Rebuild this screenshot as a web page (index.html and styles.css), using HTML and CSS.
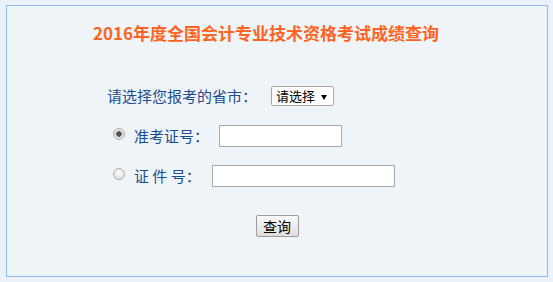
FILE: index.html
```html
<!DOCTYPE html>
<html lang="zh-CN">
<head>
<meta charset="utf-8">
<title>2016年度全国会计专业技术资格考试成绩查询</title>
<link rel="stylesheet" href="styles.css">
</head>
<body>
<div class="panel">
  <h1 class="title">2016年度全国会计专业技术资格考试成绩查询</h1>
  <form class="form">
    <div class="row row-province">
      <span class="label">请选择您报考的省市：</span>
      <span class="select-wrap">
        <select class="select">
          <option>请选择</option>
        </select>
      </span>
    </div>
    <div class="row row-radio">
      <input type="radio" name="t" class="radio" checked>
      <span class="label">准考证号：</span>
      <input type="text" class="text text-short">
    </div>
    <div class="row row-radio">
      <input type="radio" name="t" class="radio">
      <span class="label">证 件 号：</span>
      <input type="text" class="text text-long">
    </div>
    <div class="row row-button">
      <button type="button" class="btn">查询</button>
    </div>
  </form>
</div>
</body>
</html>
```
FILE: styles.css
```css
html, body {
  margin: 0;
  padding: 0;
}
body {
  background: #ebf2f9;
  font-family: "Noto Sans CJK SC", "Microsoft YaHei", sans-serif;
  width: 553px;
  height: 282px;
  overflow: hidden;
}
.panel {
  margin: 5px 0 0 6px;
  width: 540px;
  height: 270px;
  border: 1px solid #8bbbe9;
  background: #eff4f8;
  box-sizing: content-box;
}
.title {
  margin: 0;
  padding: 15px 22px 0 0;
  height: 24px;
  line-height: 24px;
  text-align: center;
  font-size: 17px;
  font-weight: bold;
  color: #ff6321;
}
.form {
  margin: 0;
  padding: 40px 0 0 0;
}
.row {
  display: flex;
  align-items: center;
  height: 22px;
}
.row-province {
  padding-left: 100px;
}
.row-radio {
  margin-top: 18px;
  padding-left: 106px;
}
.row-button {
  margin-top: 28px;
  justify-content: center;
}
.label {
  font-size: 15px;
  color: #1d4b8f;
  line-height: 22px;
  white-space: pre;
}
.row-province .label {
  margin-right: 14px;
}
.select-wrap {
  position: relative;
  display: inline-block;
  height: 20px;
}
.select-wrap::after {
  content: "";
  position: absolute;
  right: 7px;
  top: 9px;
  width: 0;
  height: 0;
  border-left: 3px solid transparent;
  border-right: 3px solid transparent;
  border-top: 5px solid #000;
  pointer-events: none;
}
.select {
  appearance: none;
  -webkit-appearance: none;
  display: block;
  width: 63px;
  height: 20px;
  margin: 0;
  padding: 0 0 0 4px;
  border: 1px solid #a6a6a6;
  border-radius: 2px;
  background: #fff;
  font-family: "Noto Sans CJK SC", sans-serif;
  font-size: 13px;
  line-height: 18px;
  color: #000;
}
.radio {
  appearance: none;
  -webkit-appearance: none;
  width: 12px;
  height: 12px;
  margin: -4px 9px 0 0;
  border: 1px solid #b0b0b0;
  border-radius: 50%;
  background: radial-gradient(circle at 50% 40%, #fdfdfd, #d6d6d6);
  box-sizing: border-box;
}
.radio:checked {
  background: radial-gradient(circle, #555 0 2.5px, #dcdcdc 3px, #f0f0f0 100%);
}
.text {
  height: 22px;
  margin: 0;
  padding: 0 3px;
  border: 1px solid #a9a9a9;
  background: #fff;
  box-sizing: border-box;
  font-size: 14px;
}
.text-short {
  width: 123px;
  margin-left: 10px;
}
.text-long {
  width: 183px;
  margin-left: 11px;
}
.btn {
  width: 43px;
  height: 22px;
  margin: 0;
  padding: 0;
  border: 1px solid #9c9c9c;
  border-radius: 2px;
  background: linear-gradient(#fafafa, #dedede);
  font-family: "Noto Sans CJK SC", sans-serif;
  font-size: 14px;
  line-height: 20px;
  color: #000;
}
```
